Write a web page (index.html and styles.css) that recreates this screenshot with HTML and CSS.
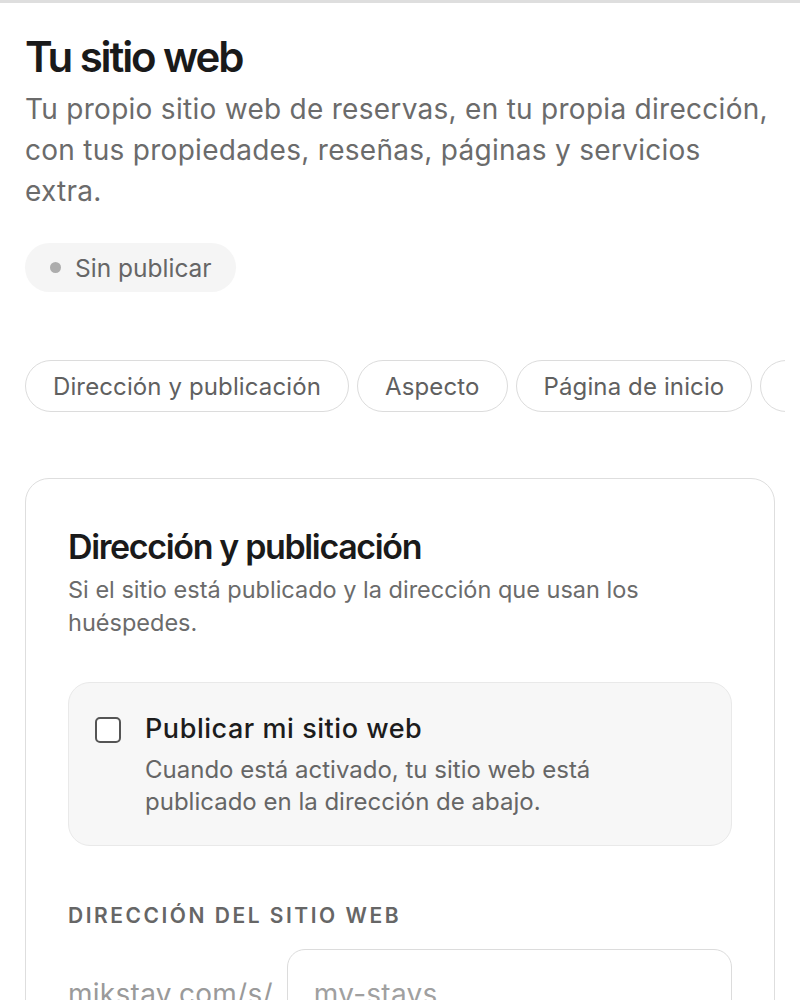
FILE: index.html
```html
<!DOCTYPE html>
<html lang="es">
<head>
<meta charset="utf-8">
<title>Tu sitio web</title>
<link rel="stylesheet" href="styles.css">
</head>
<body>
<div class="page">
  <header class="intro">
    <h1 class="title">Tu sitio web</h1>
    <p class="lead">Tu propio sitio web de reservas, en tu propia dirección, con tus propiedades, reseñas, páginas y servicios extra.</p>
    <div class="status"><span class="dot"></span>Sin publicar</div>
  </header>
  <nav class="tabs">
    <button class="tab">Dirección y publicación</button>
    <button class="tab">Aspecto</button>
    <button class="tab">Página de inicio</button>
    <button class="tab tab-more" aria-label="Propiedades"></button>
  </nav>
  <section class="card">
    <h2 class="card-title">Dirección y publicación</h2>
    <p class="card-sub">Si el sitio está publicado y la dirección que usan los huéspedes.</p>
    <label class="toggle">
      <span class="box"></span>
      <span class="toggle-text">
        <span class="toggle-title">Publicar mi sitio web</span>
        <span class="toggle-desc">Cuando está activado, tu sitio web está publicado en la dirección de abajo.</span>
      </span>
    </label>
    <div class="field-label">Dirección del sitio web</div>
    <div class="url-row">
      <span class="prefix">mikstay.com/s/</span>
      <span class="input">my-stays</span>
    </div>
  </section>
</div>
</body>
</html>
```

FILE: styles.css
```css
* { box-sizing: border-box; }
html, body { margin: 0; padding: 0; background: #fff; }
body {
  font-family: Inter, "Noto Sans", sans-serif;
  color: #1c1c1c;
  border-top: 3px solid #dedede;
  overflow: hidden;
  height: 1000px;
}
.page { padding: 0 25px; }
.intro { padding-top: 29px; }
.title {
  margin: 0;
  font-size: 42px;
  line-height: 50px;
  font-weight: 600;
  letter-spacing: -0.05em;
  color: #1a1a1a;
}
.lead {
  margin: 7px 0 0;
  font-size: 28px;
  line-height: 41px;
  letter-spacing: 0.01em;
  color: #6b6b6b;
}
.status {
  display: inline-flex;
  align-items: center;
  gap: 14px;
  margin-top: 31px;
  height: 49px;
  padding: 0 24px 0 25px;
  border-radius: 25px;
  background: #f5f5f5;
  font-size: 24.5px;
  color: #666;
}
.dot { width: 11px; height: 11px; border-radius: 50%; background: #adadad; }
.tabs {
  display: flex;
  gap: 8px;
  margin-top: 68px;
  margin-right: -10px;
  overflow: hidden;
}
.tab {
  flex: none;
  height: 52px;
  padding: 0 27px;
  border: 1.5px solid #dcdcdc;
  border-radius: 26px;
  background: #fff;
  font-family: Inter, "Noto Sans", sans-serif;
  font-size: 24px;
  letter-spacing: 0.005em;
  color: #606060;
}
.tab-more { width: 160px; }
.card {
  margin-top: 66px;
  border: 1.5px solid #dedede;
  border-radius: 24px;
  padding: 48px 42px 40px;
}
.card-title {
  margin: 0;
  font-size: 34px;
  line-height: 40px;
  font-weight: 600;
  letter-spacing: -0.04em;
  color: #1a1a1a;
}
.card-sub {
  margin: 6px 0 0;
  font-size: 23.5px;
  line-height: 33px;
  color: #6b6b6b;
}
.toggle {
  display: flex;
  gap: 24px;
  margin-top: 43px;
  padding: 30px 26px 27px;
  background: #f7f7f7;
  border: 1.5px solid #e9e9e9;
  border-radius: 22px;
}
.box {
  flex: none;
  width: 26px;
  height: 26px;
  margin-top: 4px;
  border: 2px solid #555;
  border-radius: 5px;
  background: #fff;
}
.toggle-text { display: flex; flex-direction: column; }
.toggle-title { font-size: 27px; line-height: 32px; font-weight: 500; letter-spacing: 0.02em; color: #1c1c1c; }
.toggle-desc { margin-top: 9px; font-size: 24px; line-height: 32px; color: #666; max-width: 480px; }
.field-label {
  margin-top: 57px;
  font-size: 21px;
  font-weight: 600;
  letter-spacing: 0.12em;
  text-transform: uppercase;
  color: #666;
}
.url-row { display: flex; align-items: center; gap: 14px; margin-top: 21px; }
.prefix { font-size: 28px; letter-spacing: 0.01em; color: #9a9a9a; }
.input {
  flex: 1;
  height: 90px;
  display: flex;
  align-items: center;
  padding: 0 26px;
  border: 1.5px solid #dcdcdc;
  border-radius: 18px;
  font-size: 28px;
  letter-spacing: 0.01em;
  color: #a0a0a0;
}
```
